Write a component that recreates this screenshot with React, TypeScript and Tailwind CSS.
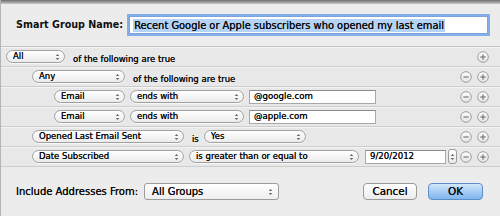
import React from "react";

const font = "font-['DejaVu_Sans',sans-serif]";

function Arrows({ className = "" }: { className?: string }) {
  return (
    <svg width="5" height="8" viewBox="0 0 5 8" className={className}>
      <path d="M0.7 3 L2.5 1 L4.3 3 Z" fill="#666" />
      <path d="M0.7 5 L2.5 7 L4.3 5 Z" fill="#666" />
    </svg>
  );
}

function Popup({ label, w }: { label: string; w: string }) {
  return (
    <div
      className={`${w} h-[13px] shrink-0 rounded-full border border-[#a0a0a0] bg-gradient-to-b from-white to-[#ebebeb] flex items-center pl-[6px] pr-[4px] shadow-[0_1px_0_rgba(255,255,255,0.7)]`}
    >
      <span className="text-[8.5px] leading-none text-[#111] flex-1 truncate [text-shadow:0_0_0.4px_#000]">{label}</span>
      <Arrows />
    </div>
  );
}

function Circle({ kind }: { kind: "plus" | "minus" }) {
  return (
    <svg width="12" height="12" viewBox="0 0 12 12">
      <defs>
        <linearGradient id={`g-${kind}`} x1="0" y1="0" x2="0" y2="1">
          <stop offset="0" stopColor="#ffffff" />
          <stop offset="1" stopColor="#e3e3e3" />
        </linearGradient>
      </defs>
      <circle cx="6" cy="6" r="5.3" fill={`url(#g-${kind})`} stroke="#949494" strokeWidth="0.9" />
      <line x1="3.3" y1="6" x2="8.7" y2="6" stroke="#707070" strokeWidth="1.1" />
      {kind === "plus" && <line x1="6" y1="3.3" x2="6" y2="8.7" stroke="#707070" strokeWidth="1.1" />}
    </svg>
  );
}

function Row({ children, pl, minus = true }: { children?: React.ReactNode; pl: string; minus?: boolean }) {
  return (
    <div
      className={`h-[20px] shrink-0 flex items-center ${pl} pr-[11px] bg-[#e8e8e8] border-b border-[#cdcdcd] shadow-[inset_0_1px_0_#f4f4f4]`}
    >
      {children}
      <div className="ml-auto flex items-center gap-[5px]">
        {minus && <Circle kind="minus" />}
        <Circle kind="plus" />
      </div>
    </div>
  );
}

function Field({ value, w }: { value: string; w: string }) {
  return (
    <div
      className={`${w} h-[14px] shrink-0 bg-white border border-[#a8a8a8] border-t-[#8c8c8c] flex items-center pl-[4px] text-[8.6px] leading-none text-[#111] [text-shadow:0_0_0.4px_#000]`}
    >
      {value}
    </div>
  );
}

function Text({ children }: { children: React.ReactNode }) {
  return <span className="text-[8.5px] leading-none text-[#111] whitespace-nowrap [text-shadow:0_0_0.4px_#000]">{children}</span>;
}

export default function App() {
  return (
    <div className={`w-[500px] h-[216px] flex flex-col bg-[#ececec] ${font} overflow-hidden border-l border-[#b5b5b5]`}>
      <div className="h-[4px] shrink-0 bg-gradient-to-b from-[#6f6f6f] to-[#c9c9c9]" />
      <div className="h-[43px] shrink-0 flex items-center pl-[15px] border-b border-[#c4c4c4]">
        <span className="text-[9.6px] font-bold text-[#111] whitespace-nowrap">Smart Group Name:</span>
        <div className="ml-[6px] w-[359px] h-[18px] bg-white border border-[#7ea3d8] shadow-[0_0_0_2px_#84aee8] flex items-center pl-[3px]">
          <span className="text-[9.9px] leading-[13px] text-[#111] bg-[#b5d3f5] px-[1px] whitespace-nowrap [text-shadow:0_0_0.4px_#000]">
            Recent Google or Apple subscribers who opened my last email
          </span>
        </div>
      </div>

      <Row pl="pl-[5px]" minus={false}>
        <Popup label="All" w="w-[59px]" />
        <div className="ml-[8px]">
          <Text>of the following are true</Text>
        </div>
      </Row>
      <Row pl="pl-[31px]">
        <Popup label="Any" w="w-[93px]" />
        <div className="ml-[8px]">
          <Text>of the following are true</Text>
        </div>
      </Row>
      <Row pl="pl-[53px]">
        <Popup label="Email" w="w-[71px]" />
        <div className="ml-[5px]">
          <Popup label="ends with" w="w-[114px]" />
        </div>
        <div className="ml-[5px]">
          <Field value="@google.com" w="w-[127px]" />
        </div>
      </Row>
      <Row pl="pl-[53px]">
        <Popup label="Email" w="w-[71px]" />
        <div className="ml-[5px]">
          <Popup label="ends with" w="w-[114px]" />
        </div>
        <div className="ml-[5px]">
          <Field value="@apple.com" w="w-[127px]" />
        </div>
      </Row>
      <Row pl="pl-[31px]">
        <Popup label="Opened Last Email Sent" w="w-[152px]" />
        <div className="ml-[8px]">
          <Text>is</Text>
        </div>
        <div className="ml-[5px]">
          <Popup label="Yes" w="w-[102px]" />
        </div>
      </Row>
      <Row pl="pl-[31px]">
        <Popup label="Date Subscribed" w="w-[152px]" />
        <div className="ml-[5px]">
          <Popup label="is greater than or equal to" w="w-[170px]" />
        </div>
        <div className="ml-[6px]">
          <Field value="9/20/2012" w="w-[81px]" />
        </div>
        <div className="ml-[2px] w-[9px] h-[15px] rounded-[3px] border border-[#9c9c9c] bg-gradient-to-b from-white to-[#e8e8e8] flex items-center justify-center">
          <Arrows />
        </div>
      </Row>

      <div className="flex-1 flex items-center pl-[15px] pr-[17px]">
        <span className="text-[10px] text-[#111] whitespace-nowrap [text-shadow:0_0_0.4px_#000]">Include Addresses From:</span>
        <div className="ml-[6px] w-[135px] h-[17px] rounded-[3px] border border-[#9c9c9c] bg-gradient-to-b from-white to-[#eeeeee] flex items-center pl-[7px] pr-[5px]">
          <span className="text-[10px] leading-none text-[#111] flex-1 [text-shadow:0_0_0.4px_#000]">All Groups</span>
          <Arrows />
        </div>
        <div className="ml-auto flex items-center gap-[11px]">
          <div className="w-[54px] h-[17px] rounded-[4px] border border-[#9a9a9a] bg-gradient-to-b from-white to-[#ececec] flex items-center justify-center text-[10.4px] text-[#111] [text-shadow:0_0_0.4px_#000]">
            Cancel
          </div>
          <div className="w-[55px] h-[17px] rounded-[4px] border border-[#5c8dca] bg-gradient-to-b from-[#d4e8fb] via-[#a5cdf3] to-[#7fb7ee] flex items-center justify-center text-[10.4px] text-[#111] [text-shadow:0_0_0.4px_#000]">
            OK
          </div>
        </div>
      </div>
    </div>
  );
}
